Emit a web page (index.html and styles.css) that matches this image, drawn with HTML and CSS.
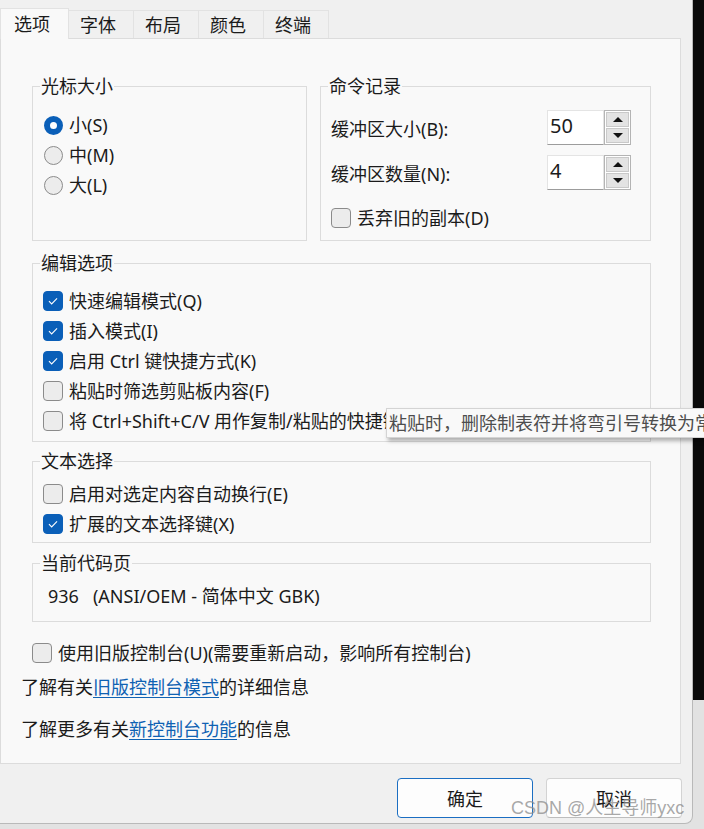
FILE: index.html
```html
<!DOCTYPE html>
<html lang="zh-CN">

<head>
    <meta charset="UTF-8">
    <meta name="viewport" content="width=device-width, initial-scale=1.0">
    <title>控制台属性</title>
    <link rel="stylesheet" href="styles.css">
</head>

<body>

    <div class="window">

        <!-- Tab strip -->
        <div class="tabs">
            <div class="tab active">选项</div>
            <div class="tab">字体</div>
            <div class="tab">布局</div>
            <div class="tab">颜色</div>
            <div class="tab">终端</div>
        </div>

        <div class="panel">
            <div class="top-row">
                <fieldset class="group cursor">
                    <legend>光标大小</legend>
                    <label class="opt"><span class="dot on"></span>小(S)</label>
                    <label class="opt"><span class="dot"></span>中(M)</label>
                    <label class="opt"><span class="dot"></span>大(L)</label>
                </fieldset>

                <fieldset class="group history">
                    <legend>命令记录</legend>
                    <div class="field">
                        <span class="field-label">缓冲区大小(B):</span>
                        <div class="spin">
                            <span class="spin-value">50</span>
                            <div class="spin-btns">
                                <span class="spin-up"></span>
                                <span class="spin-down"></span>
                            </div>
                        </div>
                    </div>
                    <div class="field">
                        <span class="field-label">缓冲区数量(N):</span>
                        <div class="spin">
                            <span class="spin-value">4</span>
                            <div class="spin-btns">
                                <span class="spin-up"></span>
                                <span class="spin-down"></span>
                            </div>
                        </div>
                    </div>
                    <label class="opt discard"><span class="box"></span>丢弃旧的副本(D)</label>
                </fieldset>
            </div>

            <fieldset class="group edit">
                <legend>编辑选项</legend>
                <label class="opt"><span class="box on"><svg viewBox="0 0 20 20"><path d="M5.5 10.2l3 3 6-6.2" /></svg></span>快速编辑模式(Q)</label>
                <label class="opt"><span class="box on"><svg viewBox="0 0 20 20"><path d="M5.5 10.2l3 3 6-6.2" /></svg></span>插入模式(I)</label>
                <label class="opt"><span class="box on"><svg viewBox="0 0 20 20"><path d="M5.5 10.2l3 3 6-6.2" /></svg></span>启用 Ctrl 键快捷方式(K)</label>
                <label class="opt"><span class="box"></span>粘贴时筛选剪贴板内容(F)</label>
                <label class="opt"><span class="box"></span>将 Ctrl+Shift+C/V 用作复制/粘贴的快捷键(C)</label>
            </fieldset>

            <fieldset class="group select">
                <legend>文本选择</legend>
                <label class="opt"><span class="box"></span>启用对选定内容自动换行(E)</label>
                <label class="opt"><span class="box on"><svg viewBox="0 0 20 20"><path d="M5.5 10.2l3 3 6-6.2" /></svg></span>扩展的文本选择键(X)</label>
            </fieldset>

            <fieldset class="group codepage">
                <legend>当前代码页</legend>
                <div class="codepage-text">936   (ANSI/OEM - 简体中文 GBK)</div>
            </fieldset>

            <label class="opt legacy"><span class="box"></span>使用旧版控制台(U)(需要重新启动，影响所有控制台)</label>

            <p class="info">了解有关<a href="#">旧版控制台模式</a>的详细信息</p>
            <p class="info more">了解更多有关<a href="#">新控制台功能</a>的信息</p>
        </div>

        <div class="actions">
            <button class="btn primary">确定</button>
            <button class="btn">取消</button>
        </div>

        <!-- Hover tooltip for the clipboard filter option -->
        <div class="tooltip">粘贴时，删除制表符并将弯引号转换为常规引号</div>

        <div class="watermark">CSDN @人生导师yxc</div>
    </div>

</body>

</html>
```

FILE: styles.css
```css
/* Windows 11 dialog palette */
:root {
    --window-bg: #f0f0f0;
    --panel-bg: #f9f9f9;
    --line: #dcdcdc;
    --text: #1b1b1b;
    --accent: #0a5fb8;
    --link: #0f62b3;
}

body {
    margin: 0;
    height: 829px;
    overflow: hidden;
    background: linear-gradient(#0a0a0a 0 700px, #e2e2e2 700px);
    font-family: "Noto Sans", "Noto Sans CJK SC", sans-serif;
    font-size: 18px;
    color: var(--text);
}

.window {
    position: relative;
    width: 692px;
    height: 823px;
    background: var(--window-bg);
    border-right: 1px solid #b9b9b9;
    border-bottom: 1px solid #b9b9b9;
    border-bottom-right-radius: 8px;
}

/* Tabs */
.tabs {
    display: flex;
    align-items: flex-end;
    height: 31px;
    padding-top: 8px;
    margin-bottom: -1px;
    position: relative;
    z-index: 1;
}

.tab {
    height: 28px;
    line-height: 28px;
    padding: 0 17px 0 11px;
    margin-bottom: 1px;
    border: 1px solid #e2e2e2;
    border-left: none;
    border-bottom: none;
    box-sizing: border-box;
}

.tab.active {
    height: 31px;
    line-height: 31px;
    margin-bottom: 0;
    padding: 0 18px 0 13px;
    background: var(--panel-bg);
    border-left: 1px solid #e2e2e2;
}

/* Main page */
.panel {
    width: 681px;
    box-sizing: border-box;
    background: var(--panel-bg);
    border: 1px solid var(--line);
    padding: 37px 0 19px 20px;
}

.group {
    margin: 0 0 0 11px;
    min-width: 0;
    border: 1px solid var(--line);
    padding: 0 10px;
    box-sizing: border-box;
}

.group legend {
    font-size: 18px;
    line-height: 20px;
    padding: 0 1px;
    margin-left: -3px;
}

.top-row {
    display: flex;
    gap: 13px;
    margin-left: 11px;
}

.top-row .group {
    margin: 0;
}

.cursor {
    width: 275px;
    padding-top: 14px;
}

.history {
    width: 331px;
    padding: 14px 18px 7px 10px;
}

.edit,
.select,
.codepage {
    width: 619px;
}

.edit {
    margin-top: 12px;
    padding-top: 13px;
    padding-bottom: 5px;
}

.select {
    margin-top: 9px;
    padding-top: 8px;
    padding-bottom: 3px;
}

.codepage {
    margin-top: 10px;
    padding-top: 8px;
    padding-bottom: 10px;
}

.codepage-text {
    height: 30px;
    line-height: 30px;
    padding-left: 5px;
    white-space: pre;
}

/* Radio / checkbox rows */
.opt {
    display: flex;
    align-items: center;
    gap: 6px;
    height: 30px;
    line-height: 30px;
    white-space: nowrap;
}

.dot {
    width: 19px;
    height: 19px;
    margin-left: 1px;
    box-sizing: border-box;
    border-radius: 50%;
    border: 1px solid #8b8b8b;
    background: #ececec;
}

.dot.on {
    border: 6px solid var(--accent);
    background: #fff;
}

.box {
    flex: none;
    display: flex;
    width: 20px;
    height: 20px;
    box-sizing: border-box;
    border: 1px solid #8b8b8b;
    border-radius: 4px;
    background: #ececec;
}

.box.on {
    background: var(--accent);
    border-color: var(--accent);
}

.box svg {
    width: 18px;
    height: 18px;
    fill: none;
    stroke: #fff;
    stroke-width: 1.2;
}

.discard {
    margin-top: 13px;
}

.legacy {
    margin: 16px 0 0 11px;
}

/* Number fields */
.field {
    display: flex;
    align-items: center;
    height: 35px;
}

.field + .field {
    margin-top: 10px;
}

.field-label {
    width: 216px;
}

.spin {
    display: flex;
    height: 35px;
}

.spin-value {
    width: 57px;
    box-sizing: border-box;
    background: #fff;
    border: 1px solid #e4e4e4;
    border-bottom-color: #9c9c9c;
    font-size: 20px;
    line-height: 29px;
    padding-left: 2px;
}

.spin-btns {
    width: 27px;
    box-sizing: border-box;
    display: flex;
    flex-direction: column;
    gap: 1px;
    padding: 1px;
    background: #fff;
    border: 1px solid #b4b4b4;
}

.spin-btns span {
    flex: 1;
    display: flex;
    align-items: center;
    justify-content: center;
    background: #e3e3e3;
    border: 1px solid #c9c9c9;
}

.spin-up::before,
.spin-down::before {
    content: "";
    border-left: 5px solid transparent;
    border-right: 5px solid transparent;
}

.spin-up::before {
    border-bottom: 5px solid #111;
}

.spin-down::before {
    border-top: 5px solid #111;
}

/* Links */
.info {
    margin: 4px 0 0;
    height: 30px;
    line-height: 30px;
}

.info.more {
    margin-top: 12px;
}

.info a {
    color: var(--link);
    text-decoration: underline;
    text-underline-offset: 3px;
}

/* Dialog buttons */
.actions {
    display: flex;
    justify-content: flex-end;
    gap: 13px;
    padding: 14px 10px 0 0;
}

.btn {
    width: 136px;
    height: 40px;
    font-family: inherit;
    font-size: 18px;
    color: var(--text);
    background: #fdfdfd;
    border: 1px solid #d3d3d3;
    border-bottom-color: #bdbdbd;
    border-radius: 4px;
}

.btn.primary {
    border-color: #1b6ec2;
}

.tooltip {
    position: absolute;
    left: 386px;
    top: 408px;
    z-index: 2;
    height: 30px;
    line-height: 28px;
    box-sizing: border-box;
    padding: 0 6px 0 2px;
    white-space: nowrap;
    color: #4d4d4d;
    background: #f9f9f9;
    border: 1px solid #d4d4d4;
    box-shadow: 2px 3px 4px rgba(0, 0, 0, 0.3);
}

.watermark {
    position: absolute;
    left: 511px;
    top: 796px;
    z-index: 2;
    font-family: "Liberation Sans", "Noto Sans CJK SC", sans-serif;
    font-size: 18px;
    line-height: 24px;
    color: rgba(140, 140, 140, 0.75);
    white-space: nowrap;
}
```
